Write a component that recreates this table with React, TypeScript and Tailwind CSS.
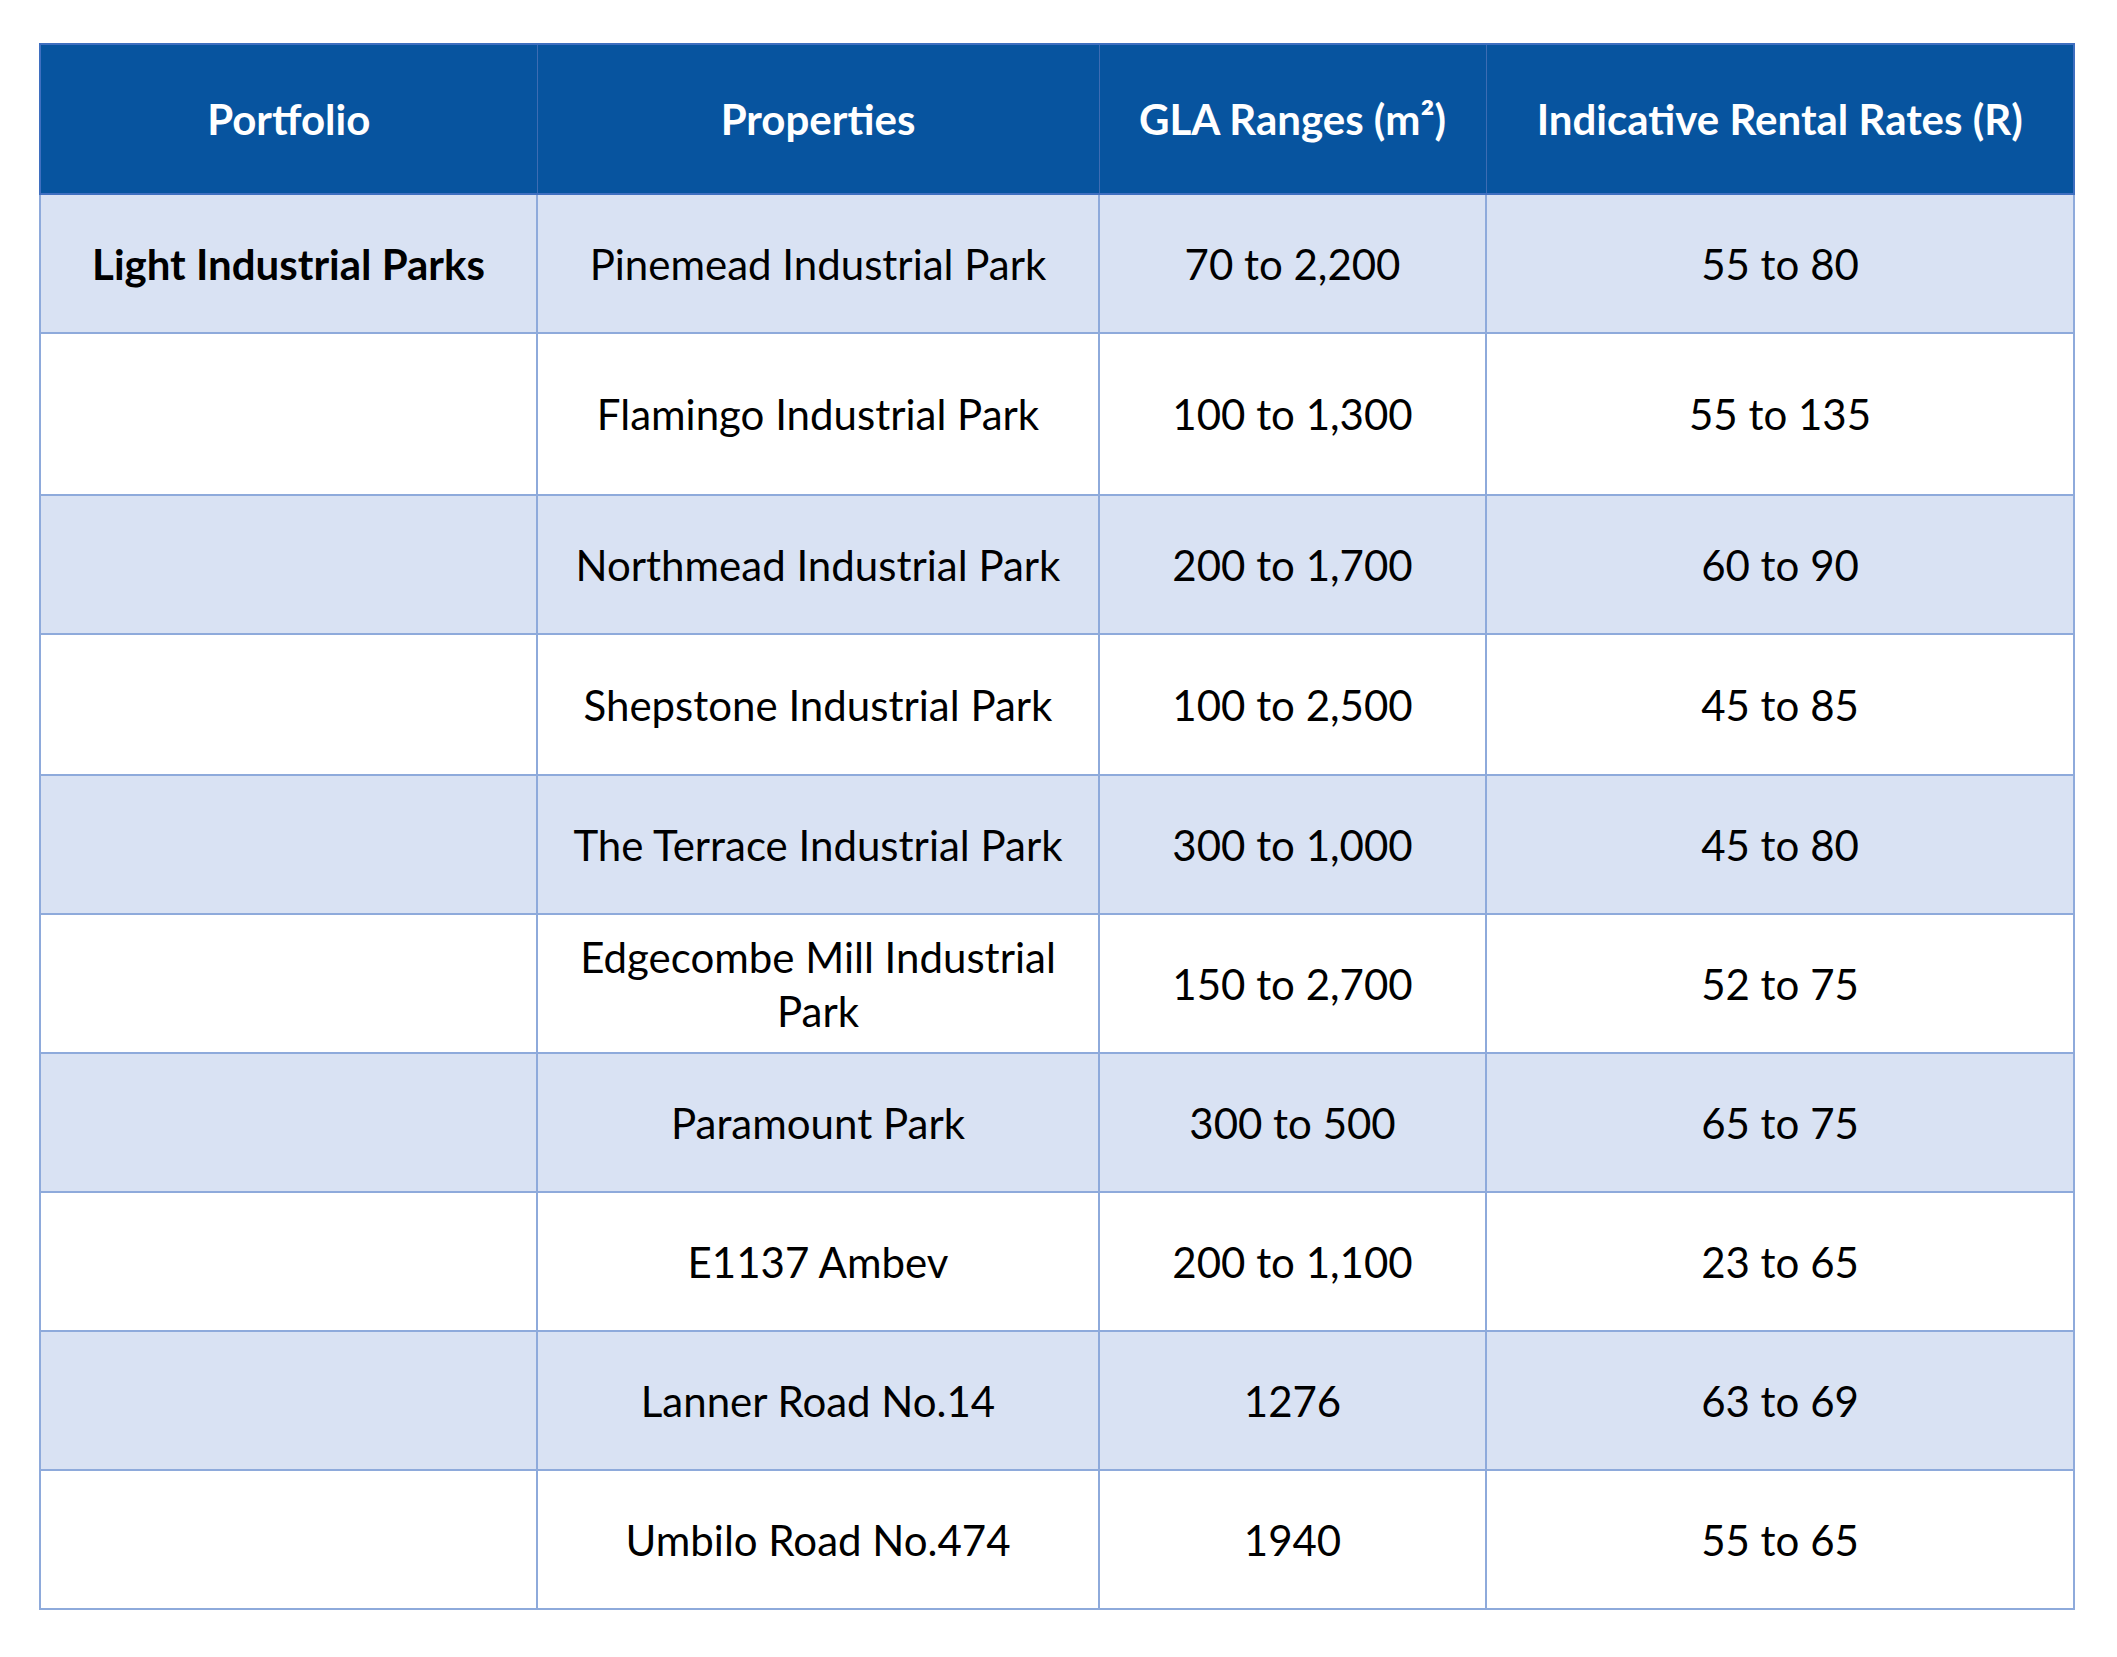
const rows = [
  { portfolio: "Light Industrial Parks", property: "Pinemead Industrial Park", gla: "70 to 2,200", rate: "55 to 80", h: "h-[139px]" },
  { portfolio: "", property: "Flamingo Industrial Park", gla: "100 to 1,300", rate: "55 to 135", h: "h-[162px]" },
  { portfolio: "", property: "Northmead Industrial Park", gla: "200 to 1,700", rate: "60 to 90", h: "h-[139px]" },
  { portfolio: "", property: "Shepstone Industrial Park", gla: "100 to 2,500", rate: "45 to 85", h: "h-[141px]" },
  { portfolio: "", property: "The Terrace Industrial Park", gla: "300 to 1,000", rate: "45 to 80", h: "h-[139px]" },
  { portfolio: "", property: "Edgecombe Mill Industrial|Park", gla: "150 to 2,700", rate: "52 to 75", h: "h-[139px]" },
  { portfolio: "", property: "Paramount Park", gla: "300 to 500", rate: "65 to 75", h: "h-[139px]" },
  { portfolio: "", property: "E1137 Ambev", gla: "200 to 1,100", rate: "23 to 65", h: "h-[139px]" },
  { portfolio: "", property: "Lanner Road No.14", gla: "1276", rate: "63 to 69", h: "h-[139px]" },
  { portfolio: "", property: "Umbilo Road No.474", gla: "1940", rate: "55 to 65", h: "h-[139px]" },
];

function Lines({ text }: { text: string }) {
  const parts = text.split("|");
  return (
    <>
      {parts.map((p, i) => (
        <span key={i}>
          {i > 0 && <br />}
          {p}
        </span>
      ))}
    </>
  );
}

export default function App() {
  return (
    <div className="w-[2117px] h-[1657px] bg-white pt-[43px] pl-[39px] font-['Lato',sans-serif] text-[42px] leading-[54px] text-black">
      <table className="border-collapse table-fixed w-[2034px]">
        <colgroup>
          <col className="w-[497px]" />
          <col className="w-[562px]" />
          <col className="w-[387px]" />
          <col className="w-[588px]" />
        </colgroup>
        <thead>
          {/* Header */}
          <tr className="h-[150px] bg-[#07549f] text-white font-bold">
            <th className="border-2 border-[#3f6fc0] border-r-[1px] border-r-[#3d6cb3] text-center font-bold">Portfolio</th>
            <th className="border-y-2 border-[#3f6fc0] border-x-[1px] border-x-[#3d6cb3] text-center font-bold">Properties</th>
            <th className="border-y-2 border-[#3f6fc0] border-x-[1px] border-x-[#3d6cb3] text-center font-bold">GLA Ranges (m²)</th>
            <th className="border-2 border-[#3f6fc0] border-l-[1px] border-l-[#3d6cb3] text-center font-bold">Indicative Rental Rates (R)</th>
          </tr>
        </thead>
        <tbody>
          {rows.map((r, i) => (
            <tr key={r.property} className={`${r.h} ${i % 2 === 0 ? "bg-[#d9e2f3]" : "bg-white"}`}>
              <td className="border-2 border-[#8eaadb] text-center font-bold">{r.portfolio}</td>
              <td className="border-2 border-[#8eaadb] text-center px-2">
                <Lines text={r.property} />
              </td>
              <td className="border-2 border-[#8eaadb] text-center">{r.gla}</td>
              <td className="border-2 border-[#8eaadb] text-center">{r.rate}</td>
            </tr>
          ))}
        </tbody>
      </table>
    </div>
  );
}
